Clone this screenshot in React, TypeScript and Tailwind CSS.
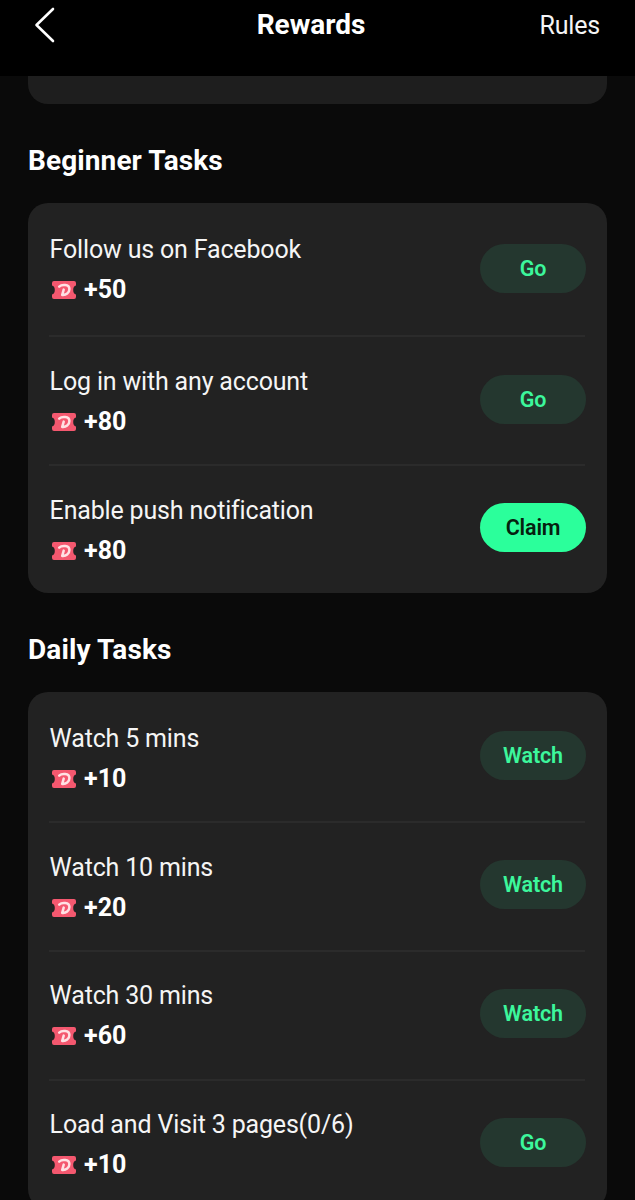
type Task = { title: string; reward: number; action: string; primary?: boolean; height: string; offset: string; buttonTop: string };

const beginnerTasks: Task[] = [
  { title: "Follow us on Facebook", reward: 50, action: "Go", height: "h-[134px]", offset: "pt-[31px]", buttonTop: "mt-[41px]" },
  { title: "Log in with any account", reward: 80, action: "Go", height: "h-[129px]", offset: "pt-[29px]", buttonTop: "mt-[38px]" },
  { title: "Enable push notification", reward: 80, action: "Claim", primary: true, height: "h-[127px]", offset: "pt-[29px]", buttonTop: "mt-[37px]" },
];

const dailyTasks: Task[] = [
  { title: "Watch 5 mins", reward: 10, action: "Watch", height: "h-[131px]", offset: "pt-[31px]", buttonTop: "mt-[39px]" },
  { title: "Watch 10 mins", reward: 20, action: "Watch", height: "h-[129px]", offset: "pt-[29px]", buttonTop: "mt-[37px]" },
  { title: "Watch 30 mins", reward: 60, action: "Watch", height: "h-[129px]", offset: "pt-[28px]", buttonTop: "mt-[37px]" },
  { title: "Load and Visit 3 pages(0/6)", reward: 10, action: "Go", height: "h-[128px]", offset: "pt-[28px]", buttonTop: "mt-[37px]" },
];

function Ticket() {
  return (
    <svg width="26" height="20" viewBox="0 0 26 20" className="shrink-0" aria-hidden="true">
      <path
        d="M3 1H23Q25 1 25 3V5.5Q22.2 6.2 22.2 10T25 14.5V17Q25 19 23 19H3Q1 19 1 17V14.5Q3.8 13.8 3.8 10T1 5.5V3Q1 1 3 1Z"
        fill="#f4586f"
      />
      <path
        d="M8.2 6.6C10.5 4.4 18.4 3.8 18.4 9C18.4 13 15 15.3 11.2 14.9L12.7 9.6"
        fill="none"
        stroke="#ffe1e4"
        strokeWidth="2.5"
        strokeLinecap="round"
        strokeLinejoin="round"
      />
    </svg>
  );
}

function TaskRow({ task, last }: { task: Task; last: boolean }) {
  return (
    <li className={`flex items-start justify-between ${task.height} ${last ? "" : "border-b-2 border-[#2b2b2b]"}`}>
      <div className={task.offset}>
        <h3 className="h-8 whitespace-nowrap pl-[0.6px] text-[25px] leading-8 tracking-[-0.17px] text-[#f5f5f5]">{task.title}</h3>
        <div className="mt-2 flex h-8 items-center gap-[7px] pl-[2px]">
          <Ticket />
          <span className="text-[25px] font-bold leading-8">+{task.reward}</span>
        </div>
      </div>
      <button
        className={`-mr-px h-[49px] w-[106px] rounded-full text-[21.5px] font-semibold leading-[49px] tracking-[-0.15px] ${task.buttonTop} ${
          task.primary ? "bg-[#2bff9b] text-[#06210f]" : "bg-[#24372f] text-[#3cf79c]"
        }`}
      >
        {task.action}
      </button>
    </li>
  );
}

function TaskCard({ tasks }: { tasks: Task[] }) {
  return (
    <ul className="rounded-[20px] bg-[#222222] pl-[21px] pr-[22px]">
      {tasks.map((task, i) => (
        <TaskRow key={task.title} task={task} last={i === tasks.length - 1} />
      ))}
    </ul>
  );
}

export default function App() {
  return (
    <div className="flex h-[1200px] w-[635px] flex-col overflow-hidden bg-[#0a0a0a] font-['Roboto',sans-serif] text-white">
      <header className="grid h-[76px] shrink-0 grid-cols-[1fr_160px_1fr] items-start bg-black pl-[34px] pr-[35px]">
        <button aria-label="Back" className="mt-[6px] w-6">
          <svg width="24" height="38" viewBox="0 0 24 38" fill="none" stroke="#fff" strokeWidth="2.6" strokeLinecap="round" strokeLinejoin="round">
            <path d="M19 3L2.5 19L19 35" />
          </svg>
        </button>
        <h1 className="mt-2 pr-3 text-center text-[28px] font-bold leading-[34px]">Rewards</h1>
        <a className="mt-[9px] text-right text-[25px] leading-[34px] tracking-[-0.2px] text-[#f5f5f5]">Rules</a>
      </header>
      <main className="pl-7 pr-[28px]">
        <div className="h-7 rounded-b-[20px] bg-[#1e1e1e]" />
        <h2 className="flex h-[99px] items-center pt-[14px] text-[28px] font-bold leading-8 tracking-[0.1px]">Beginner Tasks</h2>
        <TaskCard tasks={beginnerTasks} />
        <h2 className="flex h-[99px] items-center pt-[14px] text-[28px] font-bold leading-8 tracking-[0.1px]">Daily Tasks</h2>
        <TaskCard tasks={dailyTasks} />
      </main>
    </div>
  );
}
